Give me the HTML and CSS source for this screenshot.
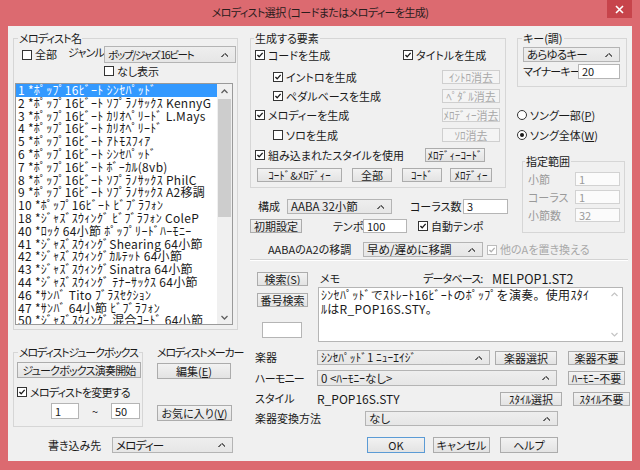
FILE: index.html
```html
<!DOCTYPE html>
<html lang="ja">
<head>
<meta charset="utf-8">
<title>メロディスト選択</title>
<link rel="stylesheet" href="styles.css">
</head>
<body>
<div class="win">
  <div class="titlebar">
    <span class="title">メロディスト選択 (コードまたはメロディーを生成)</span>
    <span class="close"><svg width="9" height="9" viewBox="0 0 9 9"><path d="M1 1L8 8M8 1L1 8" stroke="#fff" stroke-width="1.6"/></svg></span>
  </div>
  <div class="client">
    <!-- LEFT COLUMN -->
    <div class="col-left">
      <fieldset class="grp g-mel">
        <legend class="k1">メロディスト名</legend>
        <div class="row r-genre">
          <span class="cb ml8"></span><span class="cbt">全部</span>
          <span class="lbl genre-lbl k1">ジャンル</span>
          <div class="sel sel-genre"><span class="k2">ポップ/ジャズ&nbsp;16ビート</span><i class="arr"></i></div>
        </div>
        <div class="row r-none"><span class="cb"></span><span class="cbt">なし表示</span></div>
        <div class="list">
          <div class="items">
            <div class="it on">1 *ﾎﾟｯﾌﾟ16ﾋﾞｰﾄ ｼﾝｾﾊﾟｯﾄﾞ</div>
            <div class="it">2 *ﾎﾟｯﾌﾟ16ﾋﾞｰﾄ ｿﾌﾟﾗﾉｻｯｸｽ KennyG</div>
            <div class="it">3 *ﾎﾟｯﾌﾟ16ﾋﾞｰﾄ ｶﾘｵﾍﾟﾘｰﾄﾞ L.Mays</div>
            <div class="it">4 *ﾎﾟｯﾌﾟ16ﾋﾞｰﾄ ｶﾘｵﾍﾟﾘｰﾄﾞ</div>
            <div class="it">5 *ﾎﾟｯﾌﾟ16ﾋﾞｰﾄ ｱﾄﾓｽﾌｨｱ</div>
            <div class="it">6 *ﾎﾟｯﾌﾟ16ﾋﾞｰﾄ ｼﾝｾﾊﾟｯﾄﾞ</div>
            <div class="it">7 *ﾎﾟｯﾌﾟ16ﾋﾞｰﾄ ﾎﾞｰｶﾙ(8vb)</div>
            <div class="it">8 *ﾎﾟｯﾌﾟ16ﾋﾞｰﾄ ｿﾌﾟﾗﾉｻｯｸｽ PhilC</div>
            <div class="it">9 *ﾎﾟｯﾌﾟ16ﾋﾞｰﾄ ｿﾌﾟﾗﾉｻｯｸｽ A2移調</div>
            <div class="it">10 *ﾎﾟｯﾌﾟ16ﾋﾞｰﾄ ﾋﾞﾌﾞﾗﾌｫﾝ</div>
            <div class="it">18 *ｼﾞｬｽﾞｽｳｨﾝｸﾞ ﾋﾞﾌﾞﾗﾌｫﾝ ColeP</div>
            <div class="it">40 *ﾛｯｸ 64小節 ﾎﾟｯﾌﾟﾘｰﾄﾞﾊｰﾓﾆｰ</div>
            <div class="it">41 *ｼﾞｬｽﾞｽｳｨﾝｸﾞShearing 64小節</div>
            <div class="it">42 *ｼﾞｬｽﾞｽｳｨﾝｸﾞｶﾙﾃｯﾄ 64小節</div>
            <div class="it">43 *ｼﾞｬｽﾞｽｳｨﾝｸﾞSinatra 64小節</div>
            <div class="it">44 *ｼﾞｬｽﾞｽｳｨﾝｸﾞ ﾃﾅｰｻｯｸｽ 64小節</div>
            <div class="it">46 *ｻﾝﾊﾞ Tito ﾌﾞﾗｽｾｸｼｮﾝ</div>
            <div class="it">47 *ｻﾝﾊﾞ 64小節 ﾋﾞﾌﾞﾗﾌｫﾝ</div>
            <div class="it">50 *ｼﾞｬｽﾞｽｳｨﾝｸﾞ 混合ｺｰﾄﾞ 64小節</div>
          </div>
          <div class="vscroll">
            <div class="sb-btn"><svg width="7" height="5" viewBox="0 0 7 5"><path d="M0.5 4L3.5 1L6.5 4" fill="none" stroke="#606060" stroke-width="1.3"/></svg></div>
            <div class="sb-track"><div class="sb-thumb"></div></div>
            <div class="sb-btn"><svg width="7" height="5" viewBox="0 0 7 5"><path d="M0.5 1L3.5 4L6.5 1" fill="none" stroke="#606060" stroke-width="1.3"/></svg></div>
          </div>
        </div>
      </fieldset>

      <div class="row jm-row">
        <fieldset class="grp g-juke">
          <legend class="k3">メロディストジュークボックス</legend>
          <div class="btn b-juke"><span class="k1">ジュークボックス演奏開始</span></div>
          <div class="row r-chg"><span class="cb on"><svg viewBox="0 0 10 10"><path d="M1.8 5L4 7.3L8.3 2.3" fill="none" stroke="#1a1a1a" stroke-width="1.7"/></svg></span><span class="cbt k1">メロディストを変更する</span></div>
          <div class="row r-range">
            <div class="inp i-from">1</div>
            <span class="tilde">〜</span>
            <div class="inp i-to">50</div>
          </div>
        </fieldset>
        <div class="g-maker">
          <div class="maker-lbl k3">メロディストメーカー</div>
          <div class="btn b-edit">編集(<u>E</u>)</div>
          <div class="btn b-fav">お気に入り(<u>V</u>)</div>
        </div>
      </div>

      <div class="row r-write">
        <span class="lbl w-lbl">書き込み先</span>
        <div class="sel sel-write"><span class="k1">メロディー</span><i class="arr"></i></div>
      </div>
    </div>

    <!-- RIGHT AREA -->
    <div class="col-right">
      <div class="row top-row">
        <div class="col-mid">
          <fieldset class="grp g-gen">
            <legend>生成する要素</legend>
            <div class="row g1">
              <div class="cbitem w148"><span class="cb on"><svg viewBox="0 0 10 10"><path d="M1.8 5L4 7.3L8.3 2.3" fill="none" stroke="#1a1a1a" stroke-width="1.7"/></svg></span><span class="cbt">コードを生成</span></div>
              <div class="cbitem"><span class="cb on"><svg viewBox="0 0 10 10"><path d="M1.8 5L4 7.3L8.3 2.3" fill="none" stroke="#1a1a1a" stroke-width="1.7"/></svg></span><span class="cbt">タイトルを生成</span></div>
            </div>
            <div class="row g2 ind">
              <span class="cb on"><svg viewBox="0 0 10 10"><path d="M1.8 5L4 7.3L8.3 2.3" fill="none" stroke="#1a1a1a" stroke-width="1.7"/></svg></span><span class="cbt">イントロを生成</span>
              <div class="btn dis b-clr">ｲﾝﾄﾛ消去</div>
            </div>
            <div class="row g3 ind">
              <span class="cb on"><svg viewBox="0 0 10 10"><path d="M1.8 5L4 7.3L8.3 2.3" fill="none" stroke="#1a1a1a" stroke-width="1.7"/></svg></span><span class="cbt">ペダルベースを生成</span>
              <div class="btn dis b-clr">ﾍﾟﾀﾞﾙ消去</div>
            </div>
            <div class="row g4">
              <span class="cb on"><svg viewBox="0 0 10 10"><path d="M1.8 5L4 7.3L8.3 2.3" fill="none" stroke="#1a1a1a" stroke-width="1.7"/></svg></span><span class="cbt">メロディーを生成</span>
              <div class="btn dis b-clr">ﾒﾛﾃﾞｨｰ消去</div>
            </div>
            <div class="row g5 ind">
              <span class="cb"></span><span class="cbt">ソロを生成</span>
              <div class="btn dis b-clr">ｿﾛ消去</div>
            </div>
            <div class="row g6">
              <span class="cb on"><svg viewBox="0 0 10 10"><path d="M1.8 5L4 7.3L8.3 2.3" fill="none" stroke="#1a1a1a" stroke-width="1.7"/></svg></span><span class="cbt">組み込まれたスタイルを使用</span>
              <div class="btn b-mc">ﾒﾛﾃﾞｨｰｺｰﾄﾞ</div>
            </div>
            <div class="row g7">
              <div class="btn b-cm">ｺｰﾄﾞ&amp;ﾒﾛﾃﾞｨｰ</div>
              <div class="btn b-all">全部</div>
              <div class="btn b-code">ｺｰﾄﾞ</div>
              <div class="btn b-mel">ﾒﾛﾃﾞｨｰ</div>
            </div>
          </fieldset>

          <div class="row r-form">
            <span class="lbl l-form">構成</span>
            <div class="sel sel-form"><span>AABA 32小節</span><i class="arr"></i></div>
            <span class="lbl l-chorus">コーラス数</span>
            <div class="inp i-chorus">3</div>
          </div>
          <div class="row r-tempo">
            <div class="btn b-init">初期設定</div>
            <span class="lbl l-tempo">テンポ</span>
            <div class="inp i-tempo">100</div>
            <span class="cb on ml11"><svg viewBox="0 0 10 10"><path d="M1.8 5L4 7.3L8.3 2.3" fill="none" stroke="#1a1a1a" stroke-width="1.7"/></svg></span><span class="cbt">自動テンポ</span>
          </div>
        </div>

        <div class="col-key">
          <fieldset class="grp g-key">
            <legend>キー(調)</legend>
            <div class="sel sel-key"><span class="k1">あらゆるキー</span><i class="arr"></i></div>
            <div class="row r-minor">
              <span class="lbl l-minor k1">マイナーキー</span>
              <div class="inp i-minor">20</div>
            </div>
          </fieldset>
          <div class="row r-rad1"><span class="rad"></span><span class="cbt">ソング一部(<u>P</u>)</span></div>
          <div class="row r-rad2"><span class="rad on"></span><span class="cbt">ソング全体(<u>W</u>)</span></div>
          <fieldset class="grp g-range">
            <legend>指定範囲</legend>
            <div class="row rr rr1"><span class="lbl l-rng">小節</span><div class="inp dis i-rng">1</div></div>
            <div class="row rr"><span class="lbl l-rng">コーラス</span><div class="inp dis i-rng">1</div></div>
            <div class="row rr"><span class="lbl l-rng">小節数</span><div class="inp dis i-rng">32</div></div>
          </fieldset>
        </div>
      </div>

      <div class="row r-aaba">
        <span class="lbl l-aaba">AABAのA2の移調</span>
        <div class="sel sel-aaba"><span>早め/遅めに移調</span><i class="arr"></i></div>
        <span class="cb on dis ml4"><svg viewBox="0 0 10 10"><path d="M1.8 5L4 7.3L8.3 2.3" fill="none" stroke="#b0b0b0" stroke-width="1.7"/></svg></span><span class="cbt dtext">他のAを置き換える</span>
      </div>

      <div class="sep"></div>

      <div class="row r-search">
        <div class="btn b-search">検索(<u>S</u>)</div>
        <span class="lbl l-memo">メモ</span>
        <span class="lbl l-db k1">データベース：</span>
        <span class="lbl l-dbv">MELPOP1.ST2</span>
      </div>
      <div class="row r-memo">
        <div class="memo-left">
          <div class="btn b-num">番号検索</div>
          <div class="inp i-num"></div>
        </div>
        <div class="memo">
          <div class="memo-text"><div class="ml">ｼﾝｾﾊﾟｯﾄﾞでｽﾄﾚｰﾄ16ﾋﾞｰﾄのﾎﾟｯﾌﾟを演奏。使用ｽﾀｲ</div><div class="ml">ﾙはR_POP16S.STY。</div></div>
          <div class="memo-sb">
            <svg width="7" height="5" viewBox="0 0 7 5"><path d="M0.5 4L3.5 1L6.5 4" fill="none" stroke="#c4c4c4" stroke-width="1.2"/></svg>
            <svg width="7" height="5" viewBox="0 0 7 5"><path d="M0.5 1L3.5 4L6.5 1" fill="none" stroke="#c4c4c4" stroke-width="1.2"/></svg>
          </div>
        </div>
      </div>

      <div class="row r-inst">
        <span class="lbl l-low">楽器</span>
        <div class="sel sel-inst"><span>ｼﾝｾﾊﾟｯﾄﾞ1 ﾆｭｰｴｲｼﾞ</span><i class="arr"></i></div>
        <div class="btn b-pick">楽器選択</div>
        <div class="btn b-none">楽器不要</div>
      </div>
      <div class="row r-harm">
        <span class="lbl l-low k1">ハーモニー</span>
        <div class="sel sel-harm"><span>0 &lt;ﾊｰﾓﾆｰなし&gt;</span><i class="arr"></i></div>
        <div class="btn b-none">ﾊｰﾓﾆｰ不要</div>
      </div>
      <div class="row r-style">
        <span class="lbl l-low">スタイル</span>
        <span class="lbl l-stv">R_POP16S.STY</span>
        <div class="btn b-pick">ｽﾀｲﾙ選択</div>
        <div class="btn b-none">ｽﾀｲﾙ不要</div>
      </div>
      <div class="row r-conv">
        <span class="lbl l-conv">楽器変換方法</span>
        <div class="sel sel-conv"><span>なし</span><i class="arr"></i></div>
      </div>
      <div class="row r-ok">
        <div class="btn b-ok">OK</div>
        <div class="btn b-cancel">キャンセル</div>
        <div class="btn b-help">ヘルプ</div>
      </div>
    </div>
  </div>
</div>
</body>
</html>
```

FILE: styles.css
```css
* { box-sizing: border-box; }
html, body { margin: 0; padding: 0; }
body {
  width: 640px; height: 470px; overflow: hidden;
  background: #dc6a70;
  font-family: "Noto Sans CJK JP", "Noto Sans", sans-serif;
  font-size: 11px; line-height: 13px; color: #1a1a1a;
  font-feature-settings: "palt" 1;
  font-variant-east-asian: proportional-width;
}
u { text-decoration: underline; }

.k1 { letter-spacing: -0.8px; }
.k2 { letter-spacing: -1.3px; font-size: 10.5px; }
.k3 { letter-spacing: -1.2px; }

.win { width: 640px; height: 470px; background: #dc6a70; }
.titlebar {
  height: 26px; position: relative;
  display: flex; align-items: center; justify-content: center;
  font-size: 11px; letter-spacing: -0.6px; color: #2a1c1c;
}
.title { margin-top: -2px; white-space: pre; }
.close {
  position: absolute; right: 8px; top: 0;
  width: 25px; height: 18px; background: #c7444b;
  display: flex; align-items: center; justify-content: center;
}

.client {
  margin: 0 8px; height: 435px; background: #f0f0f0;
  display: flex; padding: 6px 0 0 5px;
}
.row { display: flex; align-items: center; }

/* group boxes */
.grp { margin: 0; padding: 0; border: 1px solid #d6d6d6; min-width: 0; }
.grp legend { padding: 0 1px; margin-left: 4px; line-height: 13px; height: 13px; white-space: nowrap; }

/* widgets */
.btn {
  display: flex; align-items: center; justify-content: center;
  border: 1px solid #acacac; background: linear-gradient(#f2f2f2, #e3e3e3);
  white-space: nowrap; height: 14px; font-size: 11px; line-height: 12px; overflow: hidden;
}
.btn.dis { color: #a8a8a8; border-color: #cfcfcf; background: #f4f4f4; }
.sel {
  position: relative; display: flex; align-items: center;
  border: 1px solid #b4b4b4; background: linear-gradient(#eeeeee, #e6e6e6);
  padding-left: 3px; white-space: nowrap; height: 15px; font-size: 11.5px; overflow: hidden;
}
.sel .arr {
  position: absolute; right: 7px; top: 50%; margin-top: -2px;
  width: 7px; height: 4px;
  background: linear-gradient(to bottom right, transparent 45%, #666 45%, #666 70%, transparent 70%) left/50% 100% no-repeat,
              linear-gradient(to bottom left, transparent 45%, #666 45%, #666 70%, transparent 70%) right/50% 100% no-repeat;
}
.inp {
  display: flex; align-items: center; background: #fff;
  border: 1px solid #b5b5b5; padding-left: 3px; height: 15px; font-size: 11px;
}
.inp.dis { color: #9a9a9a; border-color: #d2d2d2; background: #fbfbfb; }
.cb {
  width: 10px; height: 10px; flex: none; border: 1px solid #333; background: #fff;
  display: inline-flex;
}
.cb svg { width: 8px; height: 8px; }
.cb.dis { border-color: #bcbcbc; }
.cbt { margin-left: 3px; white-space: nowrap; }
.dtext { color: #a8a8a8; }
.rad {
  width: 10px; height: 10px; flex: none; border: 1px solid #333; border-radius: 50%;
  background: #fff; display: inline-flex; align-items: center; justify-content: center;
}
.rad.on::after { content: ""; width: 4px; height: 4px; border-radius: 50%; background: #1a1a1a; }
.lbl { white-space: nowrap; flex: none; }
.ml4 { margin-left: 4px; }
.ml8 { margin-left: 8px; }
.ml11 { margin-left: 11px; }

/* left column */
.col-left { width: 225px; flex: none; display: flex; flex-direction: column; }
.g-mel { width: 225px; height: 298px; }
.r-genre { margin-top: 1px; height: 17px; }
.genre-lbl { margin-left: 11px; align-self: flex-start; margin-top: 0; }
.sel-genre { margin-left: auto; margin-right: 1px; width: 132px; height: 17px; }
.r-none { margin-top: 1px; height: 14px; padding-left: 90px; }
.list {
  margin: 5px 0 0 1px; width: 218px; height: 242px;
  border: 1px solid #9a9a9a; background: #fff; display: flex; overflow: hidden;
}
.items { flex: 1; overflow: hidden; font-feature-settings: normal; font-variant-east-asian: normal; }
.it { height: 12.8px; line-height: 12.8px; font-size: 12px; letter-spacing: 0.3px; padding-left: 2px; white-space: nowrap; }
.it.on { background: #3399ff; color: #fff; }
.vscroll { width: 15px; flex: none; background: #f0f0f0; display: flex; flex-direction: column; }
.sb-btn { height: 14px; flex: none; display: flex; align-items: center; justify-content: center; }
.sb-track { flex: 1; padding: 1px 1px 0 1px; }
.sb-thumb { height: 118px; background: #cdcdcd; }

.jm-row { margin-top: 16px; align-items: flex-start; }
.g-juke { width: 130px; height: 81px; flex: none; }
.b-juke { margin: 3px 0 0 3px; width: 124px; height: 16px; }
.r-chg { margin-top: 7px; height: 14px; padding-left: 3px; }
.r-range { margin-top: 4px; height: 16px; }
.i-from { margin-left: 37px; width: 28px; height: 16px; }
.tilde { width: 32px; text-align: center; }
.i-to { width: 29px; height: 16px; }
.g-maker { margin-left: 9px; width: 86px; height: 81px; display: flex; flex-direction: column; }
.maker-lbl { padding-left: 5px; height: 13px; white-space: nowrap; }
.b-edit { margin: 4px 0 0 5px; width: 74px; height: 16px; }
.b-fav { margin: 26px 0 0 5px; width: 75px; height: 16px; }
.r-write { margin-top: 10px; height: 16px; }
.w-lbl { margin-left: 35px; }
.sel-write { margin-left: auto; margin-right: 5px; width: 121px; height: 16px; }

/* right area */
.col-right { margin-left: 12px; width: 382px; flex: none; display: flex; flex-direction: column; }
.top-row { align-items: flex-start; }
.col-mid { width: 260px; flex: none; display: flex; flex-direction: column; }
.g-gen { width: 256px; height: 156px; }
.g-gen legend { margin-left: 3px; }
.g-gen .row { height: 16px; padding-left: 4px; }
.g-gen .row.ind { padding-left: 22px; }
.cbitem { display: flex; align-items: center; }
.w148 { width: 148px; }
.g1 { margin-top: 2px; }
.g2 { margin-top: 6px; }
.g3, .g4 { margin-top: 3px; }
.g5, .g6 { margin-top: 4px; }
.b-clr { margin-left: auto; margin-right: 5px; width: 58px; height: 14px; }
.b-mc { margin-left: auto; margin-right: 20px; width: 60px; height: 14px; }
.g-gen .g7 { margin-top: 5px; height: 14px; padding-left: 6px; }
.b-cm { width: 85px; }
.b-all { margin-left: 10px; width: 40px; }
.b-code { margin-left: 10px; width: 40px; }
.b-mel { margin-left: 8px; width: 42px; }

.r-form { margin-top: 11px; height: 15px; }
.l-form { margin-left: 8px; width: 29px; }
.sel-form { width: 105px; }
.l-chorus { margin-left: 18px; width: 53px; }
.i-chorus { width: 45px; }
.r-tempo { margin-top: 5px; height: 14px; }
.b-init { width: 52px; }
.l-tempo { margin-left: 31px; width: 30px; }
.i-tempo { width: 44px; height: 14px; }

.col-key { margin-left: 5px; width: 117px; flex: none; display: flex; flex-direction: column; }
.g-key { margin-left: 2px; width: 110px; height: 55px; }
.sel-key { margin: 2px 0 0 5px; width: 97px; }
.r-minor { margin-top: 2px; height: 15px; padding-left: 5px; }
.l-minor { width: 55px; }
.i-minor { width: 42px; }
.r-rad1 { margin-top: 21px; height: 14px; padding-left: 2px; }
.r-rad2 { margin-top: 6px; height: 14px; padding-left: 2px; }
.g-range { margin: 13px 0 0 7px; width: 103px; height: 78px; color: #9a9a9a; }
.g-range legend { margin-left: 2px; color: #1a1a1a; }
.rr { margin-top: 4px; height: 14px; padding-left: 5px; }
.l-rng { width: 47px; }
.i-rng { width: 45px; height: 14px; }

.r-aaba { margin-top: 9px; height: 15px; }
.l-aaba { margin-left: 18px; width: 95px; }
.sel-aaba { width: 120px; }
.sep { margin-top: 2px; width: 378px; height: 2px; border-top: 1px solid #d3d3d3; border-bottom: 1px solid #fff; }

.r-search { margin-top: 10px; height: 15px; }
.b-search { margin-left: 7px; width: 51px; }
.l-memo { margin-left: 12px; width: 103px; }
.l-db { width: 69px; }
.l-dbv { font-size: 12.5px; }
.r-memo { margin-top: 1px; height: 55px; align-items: flex-start; }
.memo-left { width: 68px; flex: none; display: flex; flex-direction: column; }
.b-num { margin: 6px 0 0 7px; width: 51px; }
.i-num { margin: 15px 0 0 12px; width: 40px; height: 16px; }
.memo { width: 305px; height: 55px; border: 1px solid #b5b5b5; background: #fff; display: flex; }
.memo-text { flex: 1; min-width: 0; padding: 0 0 0 2px; font-size: 12px; line-height: 13.5px; letter-spacing: 0.3px; font-feature-settings: normal; font-variant-east-asian: normal; }
.ml { white-space: nowrap; }
.memo-sb { width: 15px; flex: none; display: flex; flex-direction: column; justify-content: space-between; align-items: center; padding: 4px 0 4px; }

.l-low { margin-left: 5px; width: 62px; }
.r-inst { margin-top: 8px; height: 15px; }
.sel-inst { width: 173px; }
.b-pick { margin-left: 5px; width: 62px; }
.b-none { margin-left: 11px; width: 57px; }
.r-harm { margin-top: 5px; height: 16px; }
.sel-harm { width: 240px; height: 16px; }
.r-style { margin-top: 5px; height: 15px; }
.l-stv { width: 178px; font-size: 12px; }
.r-conv { margin-top: 5px; height: 15px; }
.l-conv { margin-left: 5px; width: 110px; }
.sel-conv { width: 193px; }
.r-ok { margin-top: 11px; height: 16px; }
.r-ok .btn { height: 16px; }
.b-ok { margin-left: 117px; width: 58px; border-color: #5b9bd5; }
.b-cancel { margin-left: 8px; width: 57px; }
.b-help { margin-left: 10px; width: 58px; }
```
